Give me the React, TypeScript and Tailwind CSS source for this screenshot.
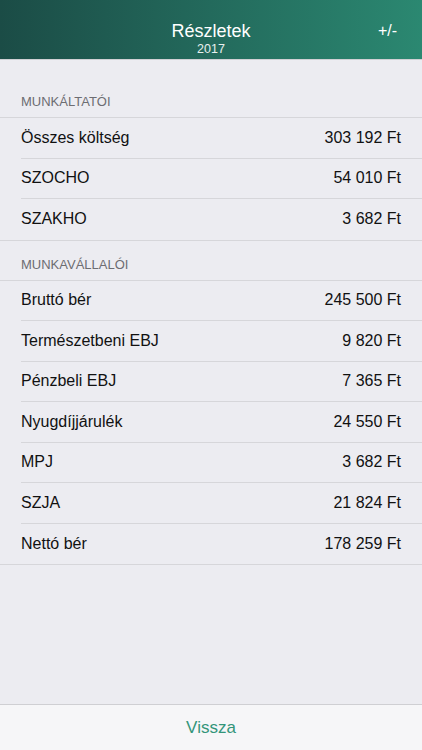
import React from "react";

const font = { fontFamily: '"Liberation Sans", Arial, sans-serif' };

type Row = { label: string; value: string };

const employer: Row[] = [
  { label: "Összes költség", value: "303 192 Ft" },
  { label: "SZOCHO", value: "54 010 Ft" },
  { label: "SZAKHO", value: "3 682 Ft" },
];

const employee: Row[] = [
  { label: "Bruttó bér", value: "245 500 Ft" },
  { label: "Természetbeni EBJ", value: "9 820 Ft" },
  { label: "Pénzbeli EBJ", value: "7 365 Ft" },
  { label: "Nyugdíjjárulék", value: "24 550 Ft" },
  { label: "MPJ", value: "3 682 Ft" },
  { label: "SZJA", value: "21 824 Ft" },
  { label: "Nettó bér", value: "178 259 Ft" },
];

function Section({ rows }: { rows: Row[] }) {
  return (
    <div className="border-t border-b border-[#d6d6da]">
      {rows.map((r, i) => (
        <div key={r.label} className="pl-[21px]">
          <div
            className={`flex h-[40.5px] items-center justify-between pr-[21px] ${
              i < rows.length - 1 ? "border-b border-[#d6d6da]" : ""
            }`}
          >
            <span className="text-[16px] text-[#111]">{r.label}</span>
            <span className="text-[16px] text-[#111]">{r.value}</span>
          </div>
        </div>
      ))}
    </div>
  );
}

export default function App() {
  return (
    <div className="flex h-[750px] w-[422px] flex-col bg-[#ececf1]" style={font}>
      <div className="relative flex h-[60px] flex-col items-center pt-[20px] bg-gradient-to-r from-[#1b4c46] via-[#236a5c] to-[#2b8871] border-b border-[#d0d0d4]">
        <div className="text-[18px] leading-[22px] text-white">Részletek</div>
        <div className="text-[12.5px] leading-[14px] text-white/90">2017</div>
        <div className="absolute right-[25px] top-[21px] text-[16px] leading-[20px] text-white">+/-</div>
      </div>
      <div className="px-[21px] pt-[34px] pb-[7px] text-[13px] leading-[16px] text-[#6d6d72]">MUNKÁLTATÓI</div>
      <Section rows={employer} />
      <div className="px-[21px] pt-[16px] pb-[7px] text-[13px] leading-[16px] text-[#6d6d72]">MUNKAVÁLLALÓI</div>
      <Section rows={employee} />
      <div className="flex-1" />
      <div className="flex h-[46px] items-center justify-center border-t border-[#cfcfd3] bg-[#f6f6f8]">
        <span className="text-[17px] text-[#33957a]">Vissza</span>
      </div>
    </div>
  );
}
